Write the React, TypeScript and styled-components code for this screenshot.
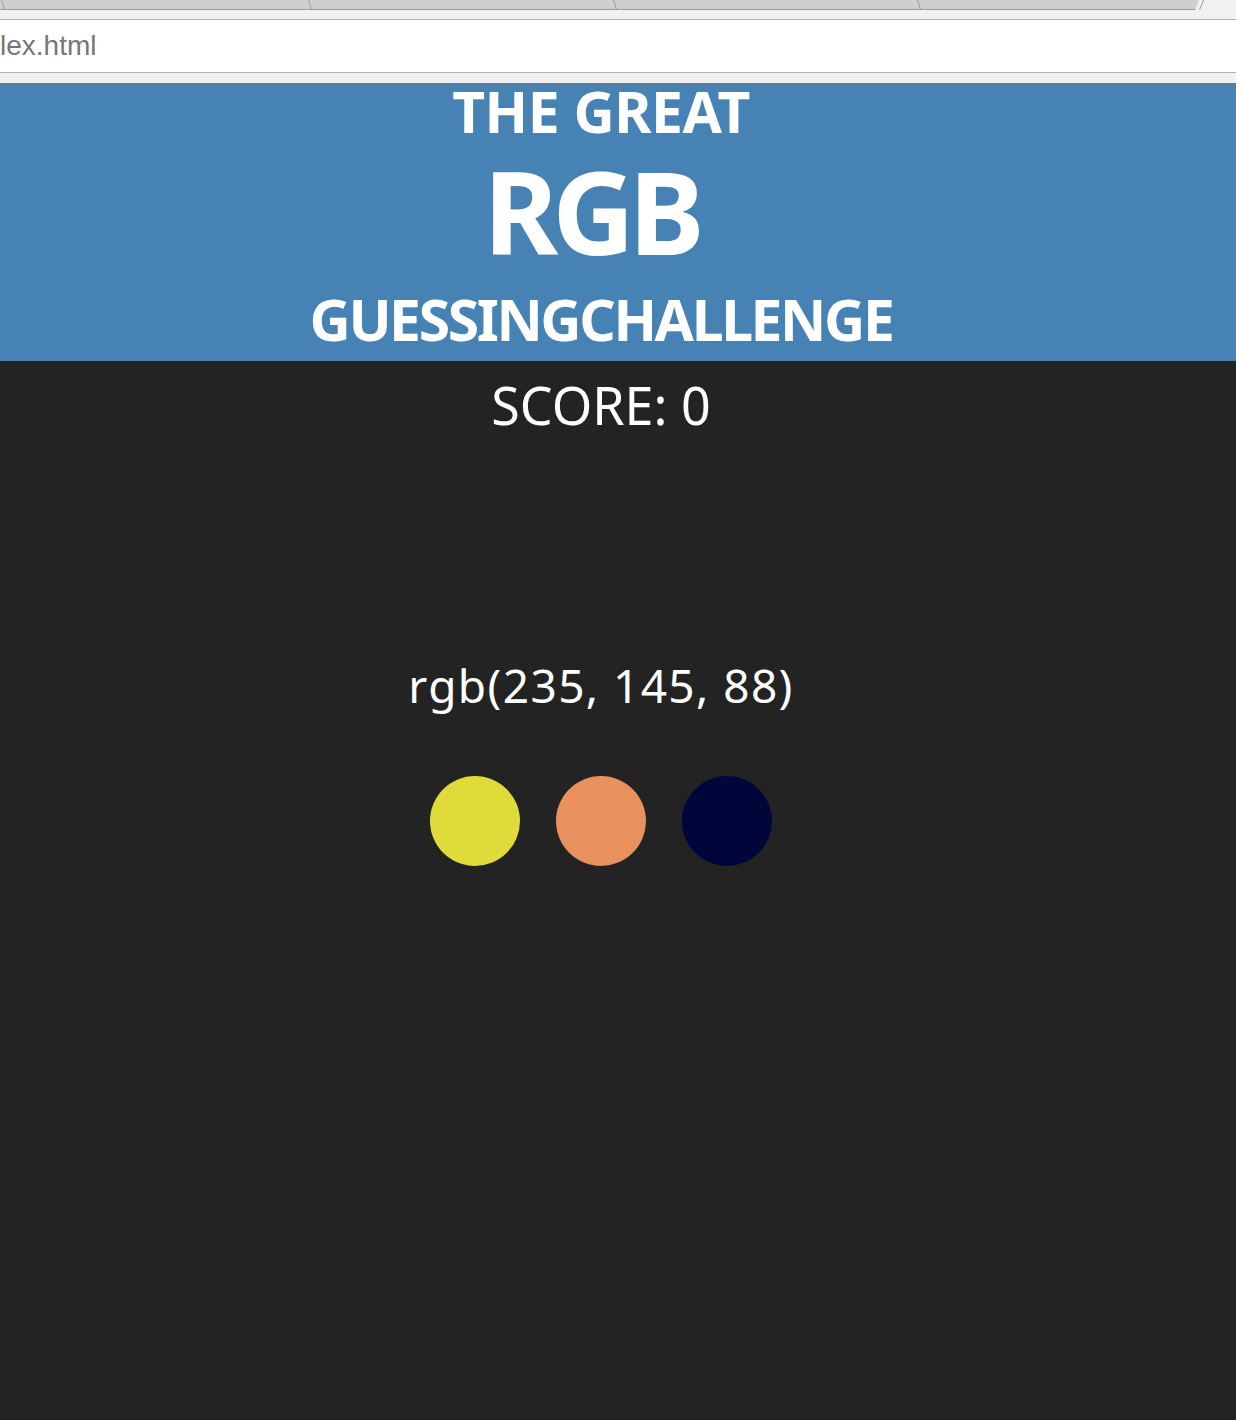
import React from "react";
import styled, { createGlobalStyle } from "styled-components";

const GlobalStyle = createGlobalStyle`
  html, body {
    margin: 0;
    padding: 0;
    background: #232323;
  }
  body {
    font-family: "Noto Sans", "Open Sans", sans-serif;
  }
`;

const Window = styled.div`
  display: flex;
  flex-direction: column;
  min-height: 1420px;
  background: #232323;
`;

/* ---------- browser chrome ---------- */
const Chrome = styled.div`
  display: flex;
  flex-direction: column;
  background: #f1f1f1;
`;

const TabStrip = styled.div`
  display: flex;
  height: 10px;
  background: #f1f1f1;
`;

const Tab = styled.div<{ $w: number; $last?: boolean }>`
  position: relative;
  flex: 0 0 ${(p) => p.$w}px;
  height: 9px;
  background: #cfcfcf;
  border-bottom: 1px solid #9b9b9b;
  clip-path: ${(p) =>
    p.$last ? "polygon(0 0, 100% 0, calc(100% - 4px) 100%, 0 100%)" : "none"};

  &::before {
    content: "";
    position: absolute;
    left: 1px;
    top: 0;
    width: 1px;
    height: 10px;
    background: #9b9b9b;
    transform: skewX(18deg);
    transform-origin: top left;
  }
`;

const TabEnd = styled.div`
  position: relative;
  flex: 0 0 6px;
  height: 10px;

  &::before {
    content: "";
    position: absolute;
    left: 0;
    top: 0;
    width: 1px;
    height: 10px;
    background: #9b9b9b;
    transform: skewX(-22deg);
    transform-origin: bottom left;
  }
`;

const Toolbar = styled.div`
  display: flex;
  flex-direction: column;
  padding: 9px 0 10px;
`;

const AddressBar = styled.div`
  height: 52px;
  background: #ffffff;
  border-top: 1px solid #b3b3b3;
  border-bottom: 1px solid #b3b3b3;
  display: flex;
  align-items: center;
  overflow: hidden;
`;

const Url = styled.span`
  font-family: "Liberation Sans", Arial, sans-serif;
  font-size: 28px;
  line-height: 52px;
  color: #767676;
  white-space: nowrap;
`;

/* ---------- game page ---------- */
const Header = styled.h1`
  margin: 0;
  padding: 0 34px 5px 0;
  background: steelblue;
  color: #ffffff;
  text-align: center;
  text-transform: uppercase;
  font-weight: 700;
  font-size: 57px;
`;

const TitleLine = styled.span<{ $lh: number; $ls: number; $shift?: number; $big?: boolean }>`
  display: block;
  line-height: ${(p) => p.$lh}px;
  letter-spacing: ${(p) => p.$ls}px;
  padding-right: ${(p) => p.$shift ?? 0}px;
  font-size: ${(p) => (p.$big ? "200%" : "100%")};
`;

const Main = styled.main`
  display: flex;
  flex-direction: column;
  align-items: center;
  padding-right: 34px;
  color: #ffffff;
`;

const Score = styled.div`
  font-size: 52px;
  line-height: 88px;
  font-weight: 400;
  text-transform: uppercase;
`;

const ColorCode = styled.div`
  margin-top: 206px;
  font-size: 46px;
  line-height: 60px;
  letter-spacing: 1.4px;
`;

const Swatches = styled.div`
  display: flex;
  gap: 36px;
  margin-top: 61px;
`;

const Swatch = styled.div<{ $color: string }>`
  width: 90px;
  height: 90px;
  border-radius: 50%;
  background: ${(p) => p.$color};
`;

const swatchColors = ["#dfdc3a", "#e8905e", "#00063a"];

export default function App() {
  return (
    <Window>
      <GlobalStyle />
      <Chrome>
        <TabStrip>
          <Tab $w={307} />
          <Tab $w={305} />
          <Tab $w={304} />
          <Tab $w={283} $last />
          <TabEnd />
        </TabStrip>
        <Toolbar>
          <AddressBar>
            <Url>lex.html</Url>
          </AddressBar>
        </Toolbar>
      </Chrome>
      <Header>
        <TitleLine $lh={56} $ls={-0.5}>
          The Great
        </TitleLine>
        <TitleLine $lh={144} $ls={-6} $shift={20} $big>
          RGB
        </TitleLine>
        <TitleLine $lh={73} $ls={-2.4}>
          GuessingChallenge
        </TitleLine>
      </Header>
      <Main>
        <Score>Score: 0</Score>
        <ColorCode>rgb(235, 145, 88)</ColorCode>
        <Swatches>
          {swatchColors.map((c) => (
            <Swatch key={c} $color={c} />
          ))}
        </Swatches>
      </Main>
    </Window>
  );
}
